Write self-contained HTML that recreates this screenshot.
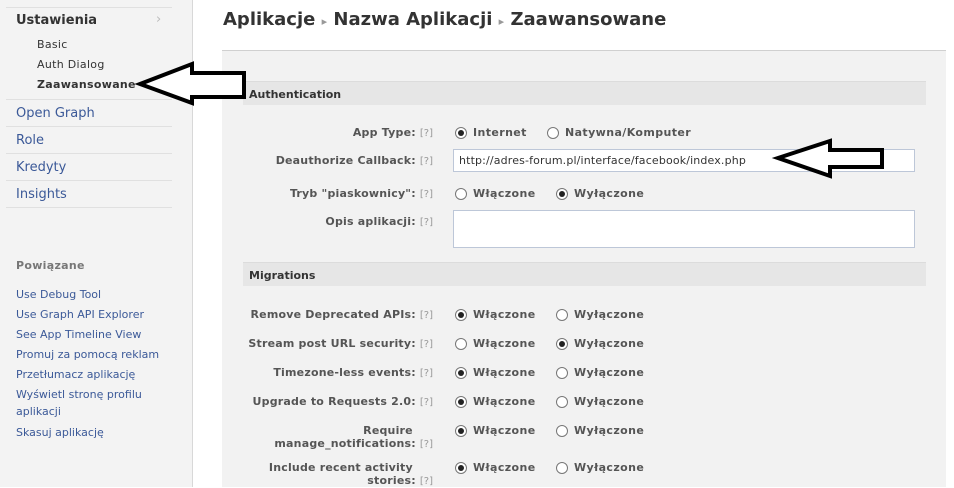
<!DOCTYPE html>
<html><head><meta charset="utf-8"><style>
*{margin:0;padding:0;box-sizing:border-box}
body{width:954px;height:487px;overflow:hidden;background:#fff;font-family:"DejaVu Sans","Liberation Sans",sans-serif;font-size:11px;color:#333;position:relative}
.a{position:absolute;white-space:nowrap}
#side{position:absolute;left:0;top:0;width:193px;height:487px;background:#f3f3f3;border-right:1px solid #d8d8d8}
.sep{position:absolute;left:6px;width:166px;height:1px;background:#e0e0e0}
.nav{font-size:13px;color:#3b5998}
.link{color:#3b5998;font-size:11px}
#panel{position:absolute;left:222px;top:50px;width:724px;height:437px;background:#f2f2f2;border-top:1px solid #d0d0d0}
.hdr{position:absolute;left:243px;width:683px;height:24px;background:#e6e6e6;border-top:1px solid #dcdcdc;font-weight:bold;color:#333;padding:6px 0 0 6px;font-size:11px}
.lbl{position:absolute;right:521px;text-align:right;font-weight:bold;color:#555;white-space:nowrap;line-height:13px;font-size:11px;letter-spacing:.2px}
.q{color:#999;font-weight:normal;font-size:10px;letter-spacing:0}
.r{position:absolute;width:12px;height:12px;border:1px solid #777;border-radius:50%;background:#fff}
.r.on::after{content:"";position:absolute;left:2px;top:2px;width:6px;height:6px;border-radius:50%;background:#222}
.t{position:absolute;font-weight:bold;color:#555;white-space:nowrap;letter-spacing:.4px}
.inp{position:absolute;background:#fff;border:1px solid #bdc7d8}
</style></head><body>
<div id="side">
<div class="sep" style="top:7px"></div>
<div class="a" style="left:16px;top:13px;font-weight:bold;font-size:13px;color:#333">Ustawienia</div>
<div class="a" style="left:156px;top:12px;color:#bbb;font-size:13px">›</div>
<div class="a" style="left:37px;top:38px;color:#333;letter-spacing:.3px">Basic</div>
<div class="a" style="left:37px;top:58px;color:#333;letter-spacing:.3px">Auth Dialog</div>
<div class="a" style="left:37px;top:78px;color:#333;font-weight:bold;letter-spacing:.3px">Zaawansowane</div>
<div class="sep" style="top:99px"></div>
<div class="a nav" style="left:16px;top:106px">Open Graph</div>
<div class="sep" style="top:126px"></div>
<div class="a nav" style="left:16px;top:133px">Role</div>
<div class="sep" style="top:153px"></div>
<div class="a nav" style="left:16px;top:160px">Kredyty</div>
<div class="sep" style="top:180px"></div>
<div class="a nav" style="left:16px;top:187px">Insights</div>
<div class="sep" style="top:207px"></div>
<div class="a" style="left:16px;top:259px;font-weight:bold;color:#777;letter-spacing:.3px">Powiązane</div>
<div class="a link" style="left:16px;top:288px">Use Debug Tool</div>
<div class="a link" style="left:16px;top:308px">Use Graph API Explorer</div>
<div class="a link" style="left:16px;top:328px">See App Timeline View</div>
<div class="a link" style="left:16px;top:348px">Promuj za pomocą reklam</div>
<div class="a link" style="left:16px;top:368px">Przetłumacz aplikację</div>
<div class="a link" style="left:16px;top:388px">Wyświetl stronę profilu</div>
<div class="a link" style="left:16px;top:405px">aplikacji</div>
<div class="a link" style="left:16px;top:426px">Skasuj aplikację</div>
</div>
<div class="a" style="left:223px;top:9px;font-size:18px;font-weight:bold;color:#333">Aplikacje <span style="color:#999;font-size:11px">▸</span> Nazwa Aplikacji <span style="color:#999;font-size:11px">▸</span> Zaawansowane</div>
<div id="panel"></div>
<div class="hdr" style="top:81px">Authentication</div>
<div class="hdr" style="top:262px">Migrations</div>

<div class="lbl" style="top:126px">App Type: <span class="q">[?]</span></div>
<div class="r on" style="left:455px;top:127px"></div><div class="t" style="left:473px;top:126px">Internet</div>
<div class="r" style="left:547px;top:127px"></div><div class="t" style="left:565px;top:126px">Natywna/Komputer</div>

<div class="lbl" style="top:154px">Deauthorize Callback: <span class="q">[?]</span></div>
<div class="inp" style="left:453px;top:149px;width:462px;height:23px"></div>
<div class="a" style="left:459px;top:154px;color:#333;letter-spacing:.15px">http://adres-forum.pl/interface/facebook/index.php</div>

<div class="lbl" style="top:187px">Tryb "piaskownicy": <span class="q">[?]</span></div>
<div class="r" style="left:455px;top:188px"></div><div class="t" style="left:473px;top:187px">Włączone</div>
<div class="r on" style="left:556px;top:188px"></div><div class="t" style="left:574px;top:187px">Wyłączone</div>

<div class="lbl" style="top:215px">Opis aplikacji: <span class="q">[?]</span></div>
<div class="inp" style="left:453px;top:210px;width:462px;height:38px"></div>

<div class="lbl" style="top:308px">Remove Deprecated APIs: <span class="q">[?]</span></div>
<div class="lbl" style="top:337px">Stream post URL security: <span class="q">[?]</span></div>
<div class="lbl" style="top:366px">Timezone-less events: <span class="q">[?]</span></div>
<div class="lbl" style="top:395px">Upgrade to Requests 2.0: <span class="q">[?]</span></div>
<div class="lbl" style="top:424px">Require&nbsp;&nbsp;&nbsp;&nbsp;&nbsp;<br>manage_notifications: <span class="q">[?]</span></div>
<div class="lbl" style="top:461px">Include recent activity&nbsp;&nbsp;&nbsp;&nbsp;&nbsp;<br>stories: <span class="q">[?]</span></div>

<div class="r on" style="left:455px;top:309px"></div><div class="t" style="left:473px;top:308px">Włączone</div>
<div class="r" style="left:556px;top:309px"></div><div class="t" style="left:574px;top:308px">Wyłączone</div>
<div class="r" style="left:455px;top:338px"></div><div class="t" style="left:473px;top:337px">Włączone</div>
<div class="r on" style="left:556px;top:338px"></div><div class="t" style="left:574px;top:337px">Wyłączone</div>
<div class="r on" style="left:455px;top:367px"></div><div class="t" style="left:473px;top:366px">Włączone</div>
<div class="r" style="left:556px;top:367px"></div><div class="t" style="left:574px;top:366px">Wyłączone</div>
<div class="r on" style="left:455px;top:396px"></div><div class="t" style="left:473px;top:395px">Włączone</div>
<div class="r" style="left:556px;top:396px"></div><div class="t" style="left:574px;top:395px">Wyłączone</div>
<div class="r on" style="left:455px;top:425px"></div><div class="t" style="left:473px;top:424px">Włączone</div>
<div class="r" style="left:556px;top:425px"></div><div class="t" style="left:574px;top:424px">Wyłączone</div>
<div class="r on" style="left:455px;top:462px"></div><div class="t" style="left:473px;top:461px">Włączone</div>
<div class="r" style="left:556px;top:462px"></div><div class="t" style="left:574px;top:461px">Wyłączone</div>

<svg class="a" style="left:0;top:0" width="954" height="487">
<polygon points="140,84 192,64 192,73 244,73 244,97 192,97 192,103" fill="#fff" stroke="#000" stroke-width="4" stroke-linejoin="miter"/>
<polygon points="778,158 830,141 830,150 882,150 882,167 830,167 830,176" fill="#fff" stroke="#000" stroke-width="4"/>
</svg>
</body></html>
